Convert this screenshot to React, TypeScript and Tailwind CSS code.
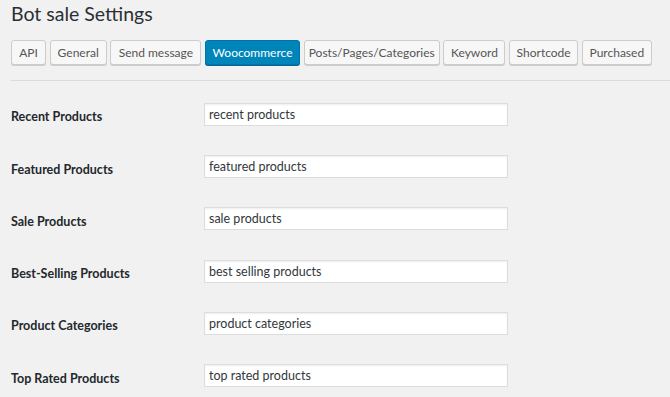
const tabs = [
  { label: 'API', width: 'w-[35px]' },
  { label: 'General', width: 'w-[57px]' },
  { label: 'Send message', width: 'w-[91px]' },
  { label: 'Woocommerce', width: 'w-[95px]', active: true },
  { label: 'Posts/Pages/Categories', width: 'w-[136px]' },
  { label: 'Keyword', width: 'w-[62px]' },
  { label: 'Shortcode', width: 'w-[69px]' },
  { label: 'Purchased', width: 'w-[70px]' },
]

const fields = [
  { label: 'Recent Products', value: 'recent products' },
  { label: 'Featured Products', value: 'featured products' },
  { label: 'Sale Products', value: 'sale products' },
  { label: 'Best-Selling Products', value: 'best selling products' },
  { label: 'Product Categories', value: 'product categories' },
  { label: 'Top Rated Products', value: 'top rated products' },
]

export default function App() {
  return (
    <div className="h-screen overflow-hidden bg-[#f1f1f1] pl-[11px] font-['Lato','Liberation_Sans',sans-serif] text-[#23282d]">
      <h1 className="pt-[1px] text-[19.5px] leading-[26px] font-normal text-[#2b2f33]">Bot sale Settings</h1>

      <div className="mt-[13px] flex gap-[3.7px]">
        {tabs.map((t) => (
          <button
            key={t.label}
            className={`${t.width} h-[25px] rounded-[3px] border text-[12px] leading-[23px] text-center ${
              t.active
                ? 'bg-[#0085ba] border-[#0073aa] text-white shadow-[0_1px_0_#006799]'
                : 'bg-[#f7f7f7] border-[#ccc] text-[#555] shadow-[0_1px_0_#ccc]'
            }`}
          >
            {t.label}
          </button>
        ))}
      </div>

      <div className="mt-[15px] border-t border-[#dcdcdc]" />

      <div className="pt-[7px]">
        {fields.map((f) => (
          <div key={f.label} className="flex h-[52.3px] items-center">
            <label className="w-[193px] pt-[7px] text-[12.5px] font-bold text-[#23282d]">{f.label}</label>
            <input
              type="text"
              defaultValue={f.value}
              className="h-[23px] w-[304px] border border-[#ddd] bg-white px-[4px] text-[12.5px] text-[#32373c] shadow-[inset_0_1px_2px_rgba(0,0,0,0.07)] outline-none"
            />
          </div>
        ))}
      </div>
    </div>
  )
}
